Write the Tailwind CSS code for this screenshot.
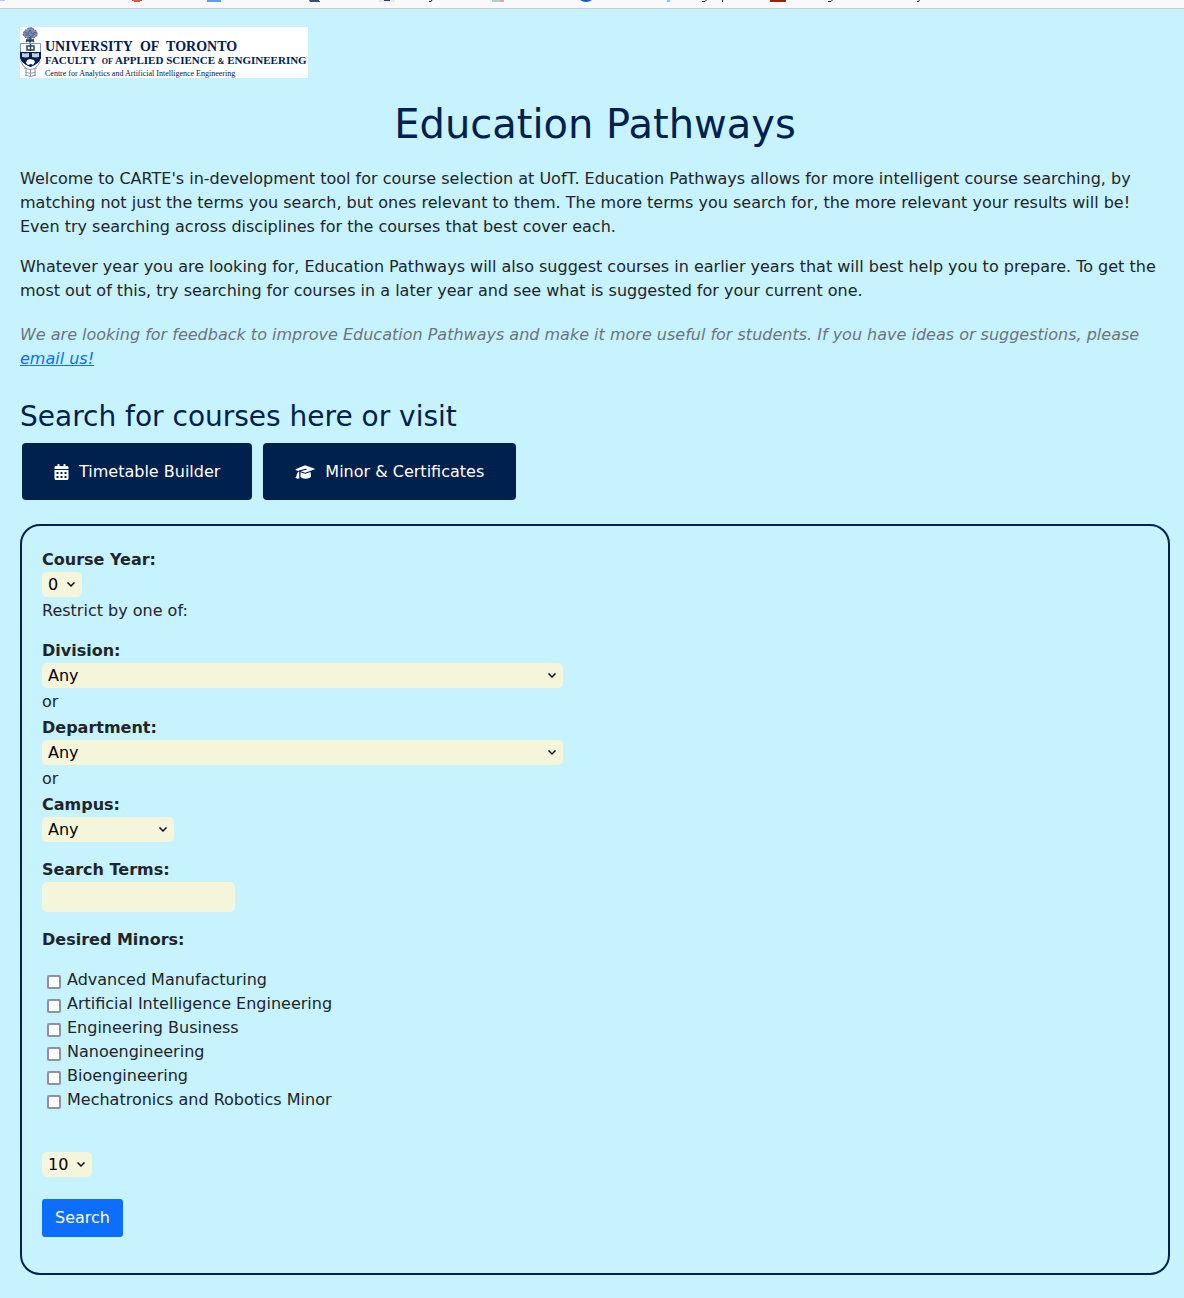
<!DOCTYPE html>
<html lang="en">
<head>
<meta charset="utf-8">
<meta name="viewport" content="width=device-width, initial-scale=1">
<title>Education Pathways</title>
<script src="https://cdn.jsdelivr.net/npm/@tailwindcss/browser@4"></script>
</head>
<body class="min-h-screen bg-[#c7f2ff] font-['Verdana','DejaVu_Sans',sans-serif] text-base leading-6 text-[#212529]">
<!-- bottom edge of the bookmarks bar -->
<div class="h-[9px] overflow-hidden border-b border-[#cccccc] bg-[#f9f9fb]" aria-hidden="true">
  <svg class="block" width="1184" height="8" viewBox="0 0 1184 8">
    <rect x="0" y="0" width="5" height="1" fill="#a9c9ff"/>
    <path d="M132 0h2v1h-2zM134 0h6v2h-6zM140 0h2v1h-2z" fill="#de5a41"/>
    <rect x="207" y="0" width="14" height="2" fill="#5b9fe8"/>
    <path d="M309 0h10v1h1v1h-10z" fill="#3b4a80"/>
    <rect x="379" y="0" width="16" height="2" fill="#ebe9dc"/>
    <rect x="384" y="0" width="6" height="1" fill="#24408c"/>
    <path d="M492 0h8v2h-8z" fill="#b4d0c0"/><path d="M500 0h4v2h-4z" fill="#e6a79b"/>
    <path d="M580 0h12q-6 4-12 0z" fill="#0756d8"/>
    <rect x="667" y="0" width="3" height="2" fill="#8bc5ef"/>
    <rect x="770" y="0" width="16" height="2" fill="#96230f"/>
    <path d="M429 1.500h2l1-1.500M702 1.500h3l1.500-1.500M722.500 0v2M828 1.500h3l1.500-1.500M917 1.500h1.500l1-1.500" fill="none" stroke="#15141a"/>
  </svg>
</div>
<main class="pt-[18px] pr-3.5 pb-6 pl-5">
  <div class="flex h-[51px] w-72 overflow-hidden bg-white text-[#00204e]">
    <svg class="shrink-0" width="21" height="51" viewBox="0 0 21 51" fill="none" stroke="#26406c">
      <path d="M10 1q3-1 4 2q3 0 3 3q1 3-2 4q-2 2-5 1q-4 1-6-2q-2-2 0-4q1-3 3-2q1-3 3-2z" fill="#8290ad" stroke="#4b5f88" stroke-dasharray="2 1"/>
      <path d="M5 5l3 2 2-4 2 4 4-2M5 8l4 0 2 2 4-3" stroke="#4b5f88"/>
      <path d="M10 10v4M6 13h8M6 15l2-2 2 2 2-2 2 2" stroke-width="1.500"/>
      <path d="M.500 16.500h20v14q-2 6-10 9q-8-3-10-9z" fill="#fff" stroke="#8794ae"/>
      <path d="M0 25h21v6q-2 6-10.500 9q-8.500-3-10.500-9z" fill="#00204e" stroke="none"/>
      <path d="M7 19h7v4h-7zM10.500 17v7" stroke-width="1.500"/>
      <path d="M2 26l3.500 .500 3.500-.500v4l-3.500 .500-3.500-.500zM12 26l3.500 .500 3.500-.500v4l-3.500 .500-3.500-.500z" fill="#c5cedd" stroke="none"/>
      <path d="M7 33l3-1 4 1 1 2-2 3-2-1-3 1-2-2z" fill="#fff" stroke="none"/>
      <path d="M1 34q1 5 5 7M20 34q-1 5-5 7M4 41q6 3 13 0M5 45q5 3 11 0M5 48q5 3 11 0M6 41v8M15 41v8M10.500 42v8" stroke="#8b98b3"/>
    </svg>
    <div class="flex flex-col whitespace-nowrap pt-[13px] pl-1 font-['Liberation_Serif',serif]">
      <span class="text-[14px] leading-[14px] font-bold">UNIVERSITY&nbsp; OF&nbsp; TORONTO</span>
      <span class="text-[11px] leading-[13px] font-bold">FACULTY&nbsp; <span class="text-[8px]">OF</span> APPLIED SCIENCE <span class="text-[8px]">&amp;</span> ENGINEERING</span>
      <span class="text-[8px] leading-[11px]">Centre for Analytics and Artificial Intelligence Engineering</span>
    </div>
  </div>

  <h1 class="mt-[22px] text-center text-[40px] leading-12 text-[#00204e]">Education Pathways</h1>
  <p class="mt-[19px]">Welcome to CARTE's in-development tool for course selection at UofT. Education Pathways allows for more intelligent course searching, by matching not just the terms you search, but ones relevant to them. The more terms you search for, the more relevant your results will be! Even try searching across disciplines for the courses that best cover each.</p>
  <p class="mt-4">Whatever year you are looking for, Education Pathways will also suggest courses in earlier years that will best help you to prepare. To get the most out of this, try searching for courses in a later year and see what is suggested for your current one.</p>
  <p class="mt-5 text-[#6c757d] italic">We are looking for feedback to improve Education Pathways and make it more useful for students. If you have ideas or suggestions, please <a href="#" class="text-[#0d6efd] underline">email us!</a></p>

  <h2 class="mt-7 text-[28px] leading-9 text-[#00204e]">Search for courses here or visit</h2>
  <div class="mt-2 ml-0.5 flex gap-[11px] text-white">
    <button type="button" class="flex h-[57px] items-center gap-2.5 rounded bg-[#00204e] px-8">
      <svg width="15" height="16" viewBox="0 0 448 512" fill="currentColor"><path d="M0 464c0 26.500 21.500 48 48 48h352c26.500 0 48-21.500 48-48V192H0v272zm320-196c0-6.600 5.400-12 12-12h40c6.600 0 12 5.400 12 12v40c0 6.600-5.400 12-12 12h-40c-6.600 0-12-5.400-12-12v-40zm0 128c0-6.600 5.400-12 12-12h40c6.600 0 12 5.400 12 12v40c0 6.600-5.400 12-12 12h-40c-6.600 0-12-5.400-12-12v-40zM192 268c0-6.600 5.400-12 12-12h40c6.600 0 12 5.400 12 12v40c0 6.600-5.400 12-12 12h-40c-6.600 0-12-5.400-12-12v-40zm0 128c0-6.600 5.400-12 12-12h40c6.600 0 12 5.400 12 12v40c0 6.600-5.400 12-12 12h-40c-6.600 0-12-5.400-12-12v-40zM64 268c0-6.600 5.400-12 12-12h40c6.600 0 12 5.400 12 12v40c0 6.600-5.400 12-12 12H76c-6.600 0-12-5.400-12-12v-40zm0 128c0-6.600 5.400-12 12-12h40c6.600 0 12 5.400 12 12v40c0 6.600-5.400 12-12 12H76c-6.600 0-12-5.400-12-12v-40zM400 64h-48V16c0-8.800-7.200-16-16-16h-32c-8.800 0-16 7.200-16 16v48H160V16c0-8.800-7.200-16-16-16h-32c-8.800 0-16 7.200-16 16v48H48C21.500 64 0 85.500 0 112v48h448v-48c0-26.500-21.500-48-48-48z"/></svg>
      Timetable Builder
    </button>
    <button type="button" class="flex h-[57px] items-center gap-2.5 rounded bg-[#00204e] px-8">
      <svg width="20" height="14" viewBox="0 0 21 14" fill="currentColor">
        <path d="M10 .200q.700-.200 1.400 0l8.700 3q1.200.600 0 1.200l-8.700 3.200q-.700.200-1.400 0l-4-1.400 6-1.500q.600-.300.300-.900-.300-.400-.800-.300l-6.500 1.600q-1 .300-1.500.900l-2.300-.800q-1.200-.700 0-1.300z"/>
        <path d="M3.300 7.100q.500-.500 1-.600l.200 1.500q-.300 3 .200 5.500l-1.700.500-2.600-.600q1.400-2.300 1.600-4.200z"/>
        <path d="M5.800 7.300l4 1.400q1 .300 1.900 0l4.700-1.700.400 4.500q-.500 2.500-6 2.500-3.500 0-5-1.700z"/>
      </svg>
      Minor &amp; Certificates
    </button>
  </div>

  <form class="mt-6 rounded-[20px] border-2 border-[#00204e] px-5 pt-[22px] pb-9">
    <label for="year" class="block font-bold">Course Year:</label>
    <div class="relative h-[25px] w-10">
      <select id="year" class="block h-full w-full appearance-none rounded-[5px] bg-[#f5f5dc] pl-1.5 text-black"><option>0</option></select>
      <svg class="pointer-events-none absolute top-[10px] right-[7px]" width="8" height="6" viewBox="0 0 8 6" fill="none" stroke="#000" stroke-width="1.500"><path d="M.500 .500l3.500 3.500 3.500-3.500"/></svg>
    </div>
    <p class="mt-0.5">Restrict by one of:</p>

    <label for="division" class="mt-4 block font-bold">Division:</label>
    <div class="relative h-[25px] w-[521px]">
      <select id="division" class="block h-full w-full appearance-none rounded-[5px] bg-[#f5f5dc] pl-1.5 text-black"><option>Any</option></select>
      <svg class="pointer-events-none absolute top-[10px] right-[7px]" width="8" height="6" viewBox="0 0 8 6" fill="none" stroke="#000" stroke-width="1.500"><path d="M.500 .500l3.500 3.500 3.500-3.500"/></svg>
    </div>
    <p class="mt-0.5">or</p>

    <label for="department" class="mt-0.5 block font-bold">Department:</label>
    <div class="relative h-[25px] w-[521px]">
      <select id="department" class="block h-full w-full appearance-none rounded-[5px] bg-[#f5f5dc] pl-1.5 text-black"><option>Any</option></select>
      <svg class="pointer-events-none absolute top-[10px] right-[7px]" width="8" height="6" viewBox="0 0 8 6" fill="none" stroke="#000" stroke-width="1.500"><path d="M.500 .500l3.500 3.500 3.500-3.500"/></svg>
    </div>
    <p class="mt-0.5">or</p>

    <label for="campus" class="mt-0.5 block font-bold">Campus:</label>
    <div class="relative h-[25px] w-[132px]">
      <select id="campus" class="block h-full w-full appearance-none rounded-[5px] bg-[#f5f5dc] pl-1.5 text-black"><option>Any</option></select>
      <svg class="pointer-events-none absolute top-[10px] right-[7px]" width="8" height="6" viewBox="0 0 8 6" fill="none" stroke="#000" stroke-width="1.500"><path d="M.500 .500l3.500 3.500 3.500-3.500"/></svg>
    </div>

    <label for="terms" class="mt-4 block font-bold">Search Terms:</label>
    <input id="terms" type="text" class="block h-[30px] w-[193px] rounded-[5px] bg-[#f5f5dc] px-1.5 text-black">

    <fieldset class="mt-4">
      <legend class="mb-4 font-bold">Desired Minors:</legend>
      <label class="flex items-center gap-1.5 pl-[5px]"><input type="checkbox" class="mt-[3px] size-3.5 appearance-none rounded-xs border-2 border-[#8f8f9d] bg-white checked:bg-[#0d6efd]">Advanced Manufacturing</label>
      <label class="flex items-center gap-1.5 pl-[5px]"><input type="checkbox" class="mt-[3px] size-3.5 appearance-none rounded-xs border-2 border-[#8f8f9d] bg-white checked:bg-[#0d6efd]">Artificial Intelligence Engineering</label>
      <label class="flex items-center gap-1.5 pl-[5px]"><input type="checkbox" class="mt-[3px] size-3.5 appearance-none rounded-xs border-2 border-[#8f8f9d] bg-white checked:bg-[#0d6efd]">Engineering Business</label>
      <label class="flex items-center gap-1.5 pl-[5px]"><input type="checkbox" class="mt-[3px] size-3.5 appearance-none rounded-xs border-2 border-[#8f8f9d] bg-white checked:bg-[#0d6efd]">Nanoengineering</label>
      <label class="flex items-center gap-1.5 pl-[5px]"><input type="checkbox" class="mt-[3px] size-3.5 appearance-none rounded-xs border-2 border-[#8f8f9d] bg-white checked:bg-[#0d6efd]">Bioengineering</label>
      <label class="flex items-center gap-1.5 pl-[5px]"><input type="checkbox" class="mt-[3px] size-3.5 appearance-none rounded-xs border-2 border-[#8f8f9d] bg-white checked:bg-[#0d6efd]">Mechatronics and Robotics Minor</label>
    </fieldset>

    <div class="relative mt-10 h-[25px] w-[50px]">
      <select aria-label="Number of results" class="block h-full w-full appearance-none rounded-[5px] bg-[#f5f5dc] pl-1.5 text-black"><option>10</option></select>
      <svg class="pointer-events-none absolute top-[10px] right-[7px]" width="8" height="6" viewBox="0 0 8 6" fill="none" stroke="#000" stroke-width="1.500"><path d="M.500 .500l3.500 3.500 3.500-3.500"/></svg>
    </div>
    <button type="submit" class="mt-[22px] block h-[38px] rounded-[3px] bg-[#0d6efd] px-[13px] text-white">Search</button>
  </form>
</main>
</body>
</html>
